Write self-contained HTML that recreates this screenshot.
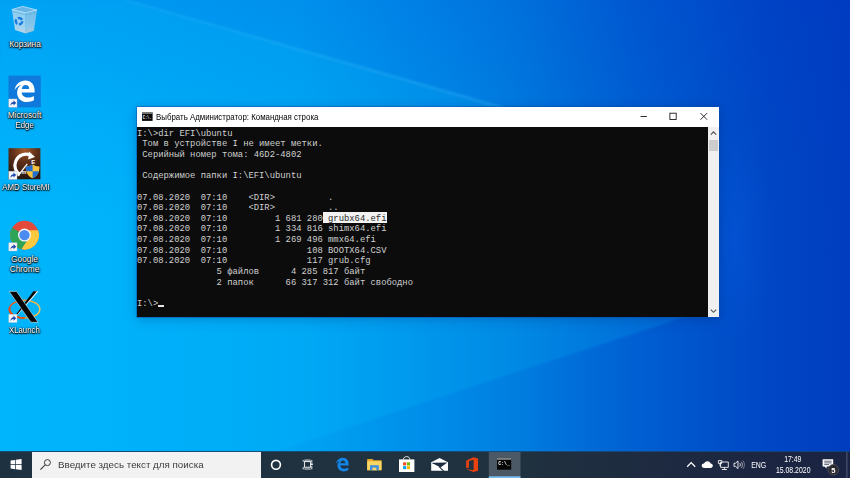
<!DOCTYPE html>
<html lang="ru">
<head>
<meta charset="utf-8">
<title>Командная строка</title>
<style>
*{box-sizing:border-box;margin:0;padding:0}
html,body{width:850px;height:478px;overflow:hidden;background:#0088e6}
body{position:relative;font-family:"Liberation Sans",sans-serif}
#wall,#icons{position:absolute;left:0;top:0;width:850px;height:478px}
/* desktop icon labels */
.lbl{position:absolute;width:80px;text-align:center;color:#fff;font-size:8.3px;line-height:10px;white-space:nowrap;
  text-shadow:0 1px 1px rgba(0,0,0,.95),0 0 2px rgba(0,0,0,.9),1px 1px 2px rgba(0,0,0,.7),0 0 1px rgba(0,0,0,.8)}
.lbl span{display:inline-block;transform-origin:50% 50%}
/* cmd window */
#win{position:absolute;left:137px;top:107px;width:582px;height:210px;background:#fff;
  box-shadow:0 0 0 .8px rgba(10,80,175,.6),0 3px 12px rgba(0,30,100,.22),0 0 5px rgba(0,30,100,.12)}
#title{position:absolute;left:0;top:0;width:582px;height:20px;background:#fff;color:#000;font-size:8.5px;line-height:20px}
#title .cap{position:absolute;left:18.9px;top:0;white-space:nowrap;transform-origin:0 50%;transform:scaleX(.927)}
#title svg{position:absolute;left:0;top:0}
#con{position:absolute;left:0;top:20px;width:571px;height:190px;background:#0c0c0c;overflow:hidden}
#selbg{position:absolute;left:185.9px;top:85px;width:63.8px;height:10.8px;background:#f2f2f2}
#con pre{position:absolute;left:0;top:1.8px;font-family:"Liberation Mono",monospace;font-size:8.85px;line-height:10.62px;color:#cfcfcf;white-space:pre}
#con .sel{color:#2a2a2a}
#cur{position:absolute;left:21.4px;top:177.6px;width:5.2px;height:2px;background:#e6e6e6}
#sb{position:absolute;left:571px;top:20px;width:11px;height:190px;background:#f0f0f0}
#sb .thumb{position:absolute;left:.6px;top:13.2px;width:9.8px;height:10.6px;background:#cdcdcd}
#sb svg{position:absolute;left:0;top:0}
/* taskbar */
#tb{position:absolute;left:0;top:451px;width:850px;height:27px;
  background:linear-gradient(90deg,#1e3141 0,#20323f 58%,#1e2c40 73%,#1c2641 88%,#1a2342 100%)}
#tb:before{content:"";position:absolute;left:0;top:0;width:850px;height:1px;background:rgba(0,130,225,.35)}
#search{position:absolute;left:32px;top:1px;width:228.6px;height:26px;background:#f2f2f2;color:#3b3b3b;font-size:9.9px;line-height:26px}
#search span{position:absolute;left:26.4px;top:.3px;white-space:nowrap;transform-origin:0 50%;transform:scaleX(.992)}
#tbsvg{position:absolute;left:0;top:0;width:850px;height:27px;will-change:transform}
</style>
</head>
<body>
<svg id="wall" viewBox="0 0 850 478" preserveAspectRatio="none">
  <defs>
    <linearGradient id="bg" x1="0" y1="0" x2="1" y2="0">
      <stop offset="0" stop-color="#00b2fc"/>
      <stop offset="0.118" stop-color="#00affa"/>
      <stop offset="0.35" stop-color="#00a4f4"/>
      <stop offset="0.506" stop-color="#008de9"/>
      <stop offset="0.60" stop-color="#007fe0"/>
      <stop offset="0.75" stop-color="#005fd2"/>
      <stop offset="0.90" stop-color="#0047c5"/>
      <stop offset="1" stop-color="#003dbf"/>
    </linearGradient>
    <linearGradient id="vg" x1="0" y1="0" x2="0" y2="1">
      <stop offset="0" stop-color="#0030c8" stop-opacity=".17"/>
      <stop offset=".30" stop-color="#0030c8" stop-opacity=".04"/>
      <stop offset=".45" stop-color="#0030c8" stop-opacity="0"/>
      <stop offset="1" stop-color="#0030c8" stop-opacity="0"/>
    </linearGradient>
    <radialGradient id="glow" cx="735" cy="240" r="70" gradientUnits="userSpaceOnUse" gradientTransform="translate(735 240) scale(.55 1.5) translate(-735 -240)">
      <stop offset="0" stop-color="#1468ff" stop-opacity=".16"/>
      <stop offset="1" stop-color="#1468ff" stop-opacity="0"/>
    </radialGradient>
    <filter id="bl" x="-10%" y="-10%" width="120%" height="120%"><feGaussianBlur stdDeviation="1.2"/></filter>
    <filter id="bl2" x="-10%" y="-10%" width="120%" height="120%"><feGaussianBlur stdDeviation="6"/></filter>
  </defs>
  <rect width="850" height="478" fill="url(#bg)"/>
  <rect width="850" height="478" fill="url(#vg)"/>
  <!-- light beams -->
  <polygon points="0,0 128,0 506,107 560,215 682,318 194,478 0,478" fill="#00c8ff" opacity=".16" filter="url(#bl)"/>
  <polygon points="123,0 128,0 516,110 504,110" fill="#8fd6ff" opacity=".12" filter="url(#bl)"/>
  
  <rect x="690" y="120" width="110" height="240" fill="url(#glow)"/>
</svg>

<!-- desktop icons -->
<svg id="icons" viewBox="0 0 850 478">
  <defs>
    <linearGradient id="binL" x1="0" y1="0" x2="0" y2="1"><stop offset="0" stop-color="#9fd0ee"/><stop offset=".7" stop-color="#b4d9ef"/><stop offset="1" stop-color="#d6dde2"/></linearGradient>
    <linearGradient id="binR" x1="0" y1="0" x2="0" y2="1"><stop offset="0" stop-color="#7fbfe6"/><stop offset=".7" stop-color="#9acbe8"/><stop offset="1" stop-color="#c3ccd2"/></linearGradient>
    <radialGradient id="amd" cx=".5" cy=".05" r=".9"><stop offset="0" stop-color="#a4592a"/><stop offset=".45" stop-color="#5c2e17"/><stop offset="1" stop-color="#2a1710"/></radialGradient>
    <linearGradient id="xring" x1="0" y1="0" x2="1" y2="0"><stop offset="0" stop-color="#ea4b12"/><stop offset=".45" stop-color="#f08a25"/><stop offset="1" stop-color="#f3c453"/></linearGradient>
  </defs>
  <!-- recycle bin -->
  <g>
    <path d="M11.9 9.6 L25.7 12.8 L25.7 33.6 L15 29.9Z" fill="url(#binL)" opacity=".88"/>
    <path d="M25.7 12.8 L37 10 L33.9 30.8 L25.7 33.6Z" fill="url(#binR)" opacity=".88"/>
    <path d="M11.9 9.6 L22.6 6.4 L37 10 L25.7 12.8Z" fill="#6cb6e4" stroke="#cfeafa" stroke-width=".8" stroke-linejoin="round" opacity=".95"/><path d="M13 11.4 L25.7 14.6 L36 11.8" fill="none" stroke="#5aaee2" stroke-width="1.2" opacity=".55"/>
    <circle cx="19" cy="21.2" r="3.2" fill="none" stroke="#1a7be0" stroke-width="2.4" stroke-dasharray="5 1.7"/>
  </g>
  <!-- edge -->
  <g>
    <rect x="8.5" y="75.6" width="32.3" height="31.8" fill="#0f7adb"/>
    <path d="M14.6 90.2 C15.6 84.2 19.9 80.6 25.4 80.6 C31.2 80.6 34.6 84.9 34.6 90.4 L34.6 92.6 L21.6 92.6 C21.9 95.9 24.6 97.6 27.9 97.6 C30.1 97.6 32.1 97 33.9 95.9 L33.9 100.3 C32 101.4 29.6 102 27 102 C21.3 102 17.1 98.4 17.1 92.7 C17.1 89.3 18.8 86.6 21.4 85.1 C18.6 85.6 16.1 87.4 14.6 90.2Z M21.7 89 L29.2 89 C29.2 86.4 27.9 84.9 25.6 84.9 C23.5 84.9 22 86.5 21.7 89Z" fill="#fff"/>
    <g transform="translate(8.8 99)">
      <rect x="0" y="0" width="8.2" height="8.2" fill="#f4f6f8" stroke="#b9c4d0" stroke-width=".4"/>
      <path d="M1.6 7.2 C1.5 4.5 2.9 3.1 4.7 3 L4.7 1.3 L7.4 3.9 L4.7 6.4 L4.7 4.8 C3.3 4.8 2.3 5.6 1.6 7.2Z" fill="#1c49ad"/>
    </g>
  </g>
  <!-- AMD StoreMI -->
  <g>
    <rect x="8.5" y="148.2" width="31.9" height="31.1" fill="url(#amd)"/>
    <path d="M20 174.5 C15.4 172 13.6 166 16 160.6 C18.6 155 25.3 152.6 30.6 155.2" fill="none" stroke="#fff" stroke-width="3.2"/>
    <path d="M29 151.4 L35 157 L28.2 159.4Z" fill="#fff"/>
    <path d="M17.6 176.2 L27.3 163.8" stroke="#fff" stroke-width="1.3"/>
    <text x="31.3" y="164.4" font-size="6" font-weight="bold" fill="#fff" font-family="Liberation Sans, sans-serif">E</text>
    <text x="21.4" y="174.2" font-size="5.4" font-weight="bold" fill="#fff" font-family="Liberation Sans, sans-serif">m</text>
    <g>
      <path d="M32.6 164.5 C34.6 165.8 36.8 166.4 39.5 166.5 C39.5 172.4 37.3 176.3 32.6 178.3 C27.9 176.3 25.7 172.4 25.7 166.5 C28.4 166.4 30.6 165.8 32.6 164.5Z" fill="#f4c23c"/>
      <path d="M32.6 164.5 C30.6 165.8 28.4 166.4 25.7 166.5 C25.7 168.3 25.9 169.9 26.3 171.3 L32.6 171.3Z" fill="#1f6fd2"/>
      <path d="M32.6 171.3 L38.9 171.3 C38.1 174.6 36 176.9 32.6 178.3Z" fill="#1f6fd2"/>
    </g>
    <g transform="translate(8.8 171.2)">
      <rect x="0" y="0" width="8.2" height="8.2" fill="#f4f6f8" stroke="#b9c4d0" stroke-width=".4"/>
      <path d="M1.6 7.2 C1.5 4.5 2.9 3.1 4.7 3 L4.7 1.3 L7.4 3.9 L4.7 6.4 L4.7 4.8 C3.3 4.8 2.3 5.6 1.6 7.2Z" fill="#1c49ad"/>
    </g>
  </g>
  <!-- chrome -->
  <g>
    <circle cx="24.5" cy="235.1" r="14.3" fill="#e34a3c"/>
    <path d="M24.5 235.1 L12.1 228 A14.3 14.3 0 0 0 21 248.95 L27.6 236.9Z" fill="#2fa456"/>
    <path d="M24.5 235.1 L12.1 228 A14.3 14.3 0 0 0 21.9 249.15 L29.2 237.5Z" fill="#2fa456"/>
    <path d="M24.5 235.1 L38.3 231.4 A14.3 14.3 0 0 1 21.6 249.1 L29.8 236.6Z" fill="#fbc940"/>
    <path d="M24.5 230.2 L37.95 230.2 A14.3 14.3 0 0 1 21.7 249.12 L30 238Z" fill="#fbc940"/>
    <circle cx="24.5" cy="235.1" r="6.5" fill="#f4f6f8"/>
    <circle cx="24.5" cy="235.1" r="5.2" fill="#4c8bf0"/>
    <g transform="translate(8.8 242.8)">
      <rect x="0" y="0" width="8.2" height="8.2" fill="#f4f6f8" stroke="#b9c4d0" stroke-width=".4"/>
      <path d="M1.6 7.2 C1.5 4.5 2.9 3.1 4.7 3 L4.7 1.3 L7.4 3.9 L4.7 6.4 L4.7 4.8 C3.3 4.8 2.3 5.6 1.6 7.2Z" fill="#1c49ad"/>
    </g>
  </g>
  <!-- XLaunch -->
  <g>
    <ellipse cx="24.6" cy="309.2" rx="15.2" ry="8.9" fill="none" stroke="url(#xring)" stroke-width="1.5"/>
    <path d="M34.6 291.2 L38.4 291.2 L17.6 315 L15.9 315Z" fill="#fff"/><path d="M33.4 291.2 L37 291.2 L16.9 315 L15.6 315Z" fill="#0a0a0a"/>
    <path d="M9.2 291.4 L16.6 291.4 L38 322.3 L30.9 322.3Z" fill="#050505" stroke="#fff" stroke-width=".5"/>
    <path d="M9.6 308 A15.2 8.9 0 0 0 24.6 318.1" fill="none" stroke="#ea4b12" stroke-width="2"/>
    <g transform="translate(8.8 314.3)">
      <rect x="0" y="0" width="8.2" height="8.2" fill="#f4f6f8" stroke="#b9c4d0" stroke-width=".4"/>
      <path d="M1.6 7.2 C1.5 4.5 2.9 3.1 4.7 3 L4.7 1.3 L7.4 3.9 L4.7 6.4 L4.7 4.8 C3.3 4.8 2.3 5.6 1.6 7.2Z" fill="#1c49ad"/>
    </g>
  </g>
</svg>
<div class="lbl" style="left:-15px;top:38.6px"><span>Корзина</span></div>
<div class="lbl" style="left:-15.5px;top:109.8px"><span>Microsoft</span><br><span style="transform:scaleX(.94)">Edge</span></div>
<div class="lbl" style="left:-14.5px;top:182.3px"><span style="transform:scaleX(.95)">AMD StoreMI</span></div>
<div class="lbl" style="left:-15.5px;top:253.8px"><span>Google</span><br><span>Chrome</span></div>
<div class="lbl" style="left:-15.2px;top:325.3px"><span style="transform:scaleX(.94)">XLaunch</span></div>

<!-- command prompt window -->
<div id="win">
  <div id="title">
    <svg width="582" height="20" viewBox="0 0 582 20">
      <rect x="5" y="5.3" width="10.6" height="8.6" fill="#0a0a0a"/>
      <rect x="5" y="5.3" width="10.6" height="1.5" fill="#8f8f8f"/>
      <text x="5.8" y="12.2" font-size="4.6" font-weight="bold" fill="#fff" font-family="Liberation Mono, monospace" textLength="8.6" lengthAdjust="spacingAndGlyphs">C:\.</text>
      <path d="M503.5 9.5 H509.9" stroke="#1a1a1a" stroke-width=".9"/>
      <rect x="532.9" y="6.2" width="6.3" height="6.3" fill="none" stroke="#1a1a1a" stroke-width=".9"/>
      <path d="M563.5 6.1 L570.1 12.7 M570.1 6.1 L563.5 12.7" stroke="#1a1a1a" stroke-width=".9"/>
    </svg>
    <span class="cap">Выбрать Администратор: Командная строка</span>
  </div>
  <div id="con"><div id="selbg"></div><pre>I:\&gt;dir EFI\ubuntu
 Том в устройстве I не имеет метки.
 Серийный номер тома: 46D2-4802

 Содержимое папки I:\EFI\ubuntu

07.08.2020  07:10    &lt;DIR&gt;          .
07.08.2020  07:10    &lt;DIR&gt;          ..
07.08.2020  07:10         1 681 280<span class="sel"> grubx64.efi</span>
07.08.2020  07:10         1 334 816 shimx64.efi
07.08.2020  07:10         1 269 496 mmx64.efi
07.08.2020  07:10               108 BOOTX64.CSV
07.08.2020  07:10               117 grub.cfg
               5 файлов      4 285 817 байт
               2 папок      66 317 312 байт свободно

I:\&gt;</pre><div id="cur"></div></div>
  <div id="sb"><div class="thumb"></div>
    <svg width="11" height="190" viewBox="0.5 0 11 190">
      <path d="M3.3 7.6 L6 4.9 L8.7 7.6" fill="none" stroke="#505050" stroke-width="1.1"/>
      <path d="M3.3 182.6 L6 185.3 L8.7 182.6" fill="none" stroke="#505050" stroke-width="1.1"/>
    </svg>
  </div>
</div>

<!-- taskbar -->
<div id="tb">
  <div id="search"><span>Введите здесь текст для поиска</span></div>
  <svg id="tbsvg" viewBox="0 451 850 27">
    <!-- start -->
    <path d="M10.6 460.6 L15.2 459.95 V464.2 H10.6Z M15.9 459.85 L21.6 459.05 V464.2 H15.9Z M10.6 464.9 H15.2 V469.2 L10.6 468.55Z M15.9 464.9 H21.6 V470.1 L15.9 469.3Z" fill="#fff"/>
    <!-- magnifier -->
    <circle cx="47.4" cy="462.6" r="3" fill="none" stroke="#3a3a3a" stroke-width="1"/>
    <path d="M45.2 464.8 L40.4 469.6" stroke="#3a3a3a" stroke-width="1.1"/>
    <!-- cortana -->
    <circle cx="276" cy="464.8" r="4.4" fill="none" stroke="#fff" stroke-width="1.6"/>
    <!-- task view -->
    <g fill="none" stroke="#fff" stroke-width=".9">
      <rect x="304.4" y="461.6" width="6.2" height="5.6"/>
      <path d="M303.2 460 V461.6 M303.2 467.2 V469.4 M311.8 460 V462.6 M311.8 466 V469.4 M304.4 460.1 H310.6 M304.4 469 H310.6"/>
    </g>
    <circle cx="311.9" cy="464.3" r=".95" fill="#fff"/>
    <!-- edge -->
    <g transform="translate(342.3 464.6) scale(.64) translate(-24.6 -91.3)">
      <path d="M14.6 90.2 C15.6 84.2 19.9 80.6 25.4 80.6 C31.2 80.6 34.6 84.9 34.6 90.4 L34.6 92.6 L21.6 92.6 C21.9 95.9 24.6 97.6 27.9 97.6 C30.1 97.6 32.1 97 33.9 95.9 L33.9 100.3 C32 101.4 29.6 102 27 102 C21.3 102 17.1 98.4 17.1 92.7 C17.1 89.3 18.8 86.6 21.4 85.1 C18.6 85.6 16.1 87.4 14.6 90.2Z M21.7 89 L29.2 89 C29.2 86.4 27.9 84.9 25.6 84.9 C23.5 84.9 22 86.5 21.7 89Z" fill="#1385e6"/>
    </g>
    <!-- explorer -->
    <g>
      <path d="M367.2 459 H372.6 L373.6 460.2 H381.5 V470.2 H367.2Z" fill="#e8a92a"/>
      <rect x="367.2" y="461.2" width="14.3" height="9" fill="#f9d564"/>
      <path d="M370 465.2 H378.8 V470.2 H370Z" fill="#3d8fe2"/>
      <rect x="372.4" y="467.6" width="4" height="2.6" fill="#f9d564"/>
    </g>
    <!-- store -->
    <g>
      <path d="M403.4 459.6 C403.4 455.6 409.9 455.6 409.9 459.6" fill="none" stroke="#fff" stroke-width=".9"/>
      <path d="M399 459.4 H414.4 V472 H399Z" fill="#fff"/>
      <rect x="403.1" y="462.3" width="3.1" height="3.1" fill="#ef4f25"/>
      <rect x="406.9" y="462.3" width="3.1" height="3.1" fill="#7db700"/>
      <rect x="403.1" y="466.1" width="3.1" height="3.1" fill="#00a3ee"/>
      <rect x="406.9" y="466.1" width="3.1" height="3.1" fill="#fdb700"/>
    </g>
    <!-- mail -->
    <g>
      <path d="M431.2 462.2 L439.6 458 L448 462.2 V470.8 H431.2Z" fill="#fff"/>
      <path d="M432.6 463.4 L445.6 463.2 L439.8 467.4 L443.6 470.8" fill="none" stroke="#1f2d40" stroke-width="1.1"/>
      <path d="M432.6 463.2 L445.8 463 L440 467.2Z" fill="#1f2d40"/>
    </g>
    <!-- office -->
    <path d="M466.2 468.6 V460.4 L473.6 457.2 L478 458.4 V470.8 L473.6 472 L466.2 469.2 L473.6 470 V459.8 L468.9 460.9 V467.5Z" fill="#e8430f"/>
    <!-- cmd active -->
    <rect x="488.8" y="452" width="31.7" height="26" fill="#4b5866"/>
    <rect x="488.8" y="476.3" width="31.7" height="1.7" fill="#79bdf0"/>
    <rect x="497" y="458.2" width="14.2" height="11.5" fill="#050505"/>
    <rect x="497" y="458.2" width="14.2" height="1.5" fill="#9a9a9a"/>
    <text x="498.2" y="464.6" font-size="5.2" font-weight="bold" fill="#fff" font-family="Liberation Mono, monospace" textLength="11.6" lengthAdjust="spacingAndGlyphs">C:\_</text>
    <!-- tray -->
    <path d="M687.2 466.7 L691.2 462.6 L695.2 466.7" fill="none" stroke="#fff" stroke-width="1.3"/>
    <path d="M704.3 468 C702.6 468 701.7 466.9 701.7 465.7 C701.7 464.4 702.8 463.5 704 463.6 C704.5 462 706 461.1 707.6 461.2 C709.2 461.3 710.3 462.3 710.7 463.6 C711.9 463.7 712.8 464.6 712.8 465.8 C712.8 467 711.9 468 710.6 468Z" fill="#fff"/>
    <g fill="none" stroke="#fff" stroke-width=".85">
      <path d="M720.6 462 H728.3 V467.4 H720.6Z"/>
      <path d="M724.4 467.4 V469.4 M721.8 469.5 H727"/>
      <path d="M718.4 460.6 H721.8 V463.4 H718.4Z M720 463.4 V466"/>
    </g>
    <g fill="none" stroke="#fff" stroke-width=".85">
      <path d="M734 463.2 H735.6 L738 460.9 V468.7 L735.6 466.4 H734Z"/>
      <path d="M739.8 463.1 C740.5 464.1 740.5 465.5 739.8 466.5" opacity=".95"/>
      <path d="M741.4 461.8 C742.7 463.6 742.7 466 741.4 467.8" opacity=".7"/>
      <path d="M743 460.6 C744.9 463.2 744.9 466.4 743 469" opacity=".45"/>
    </g>
    <g font-family="Liberation Sans, sans-serif" fill="#fff" text-anchor="middle">
      <text x="758.7" y="467.5" font-size="8.5" textLength="15" lengthAdjust="spacingAndGlyphs">ENG</text>
      <text x="792.8" y="461.7" font-size="8.6" textLength="17.2" lengthAdjust="spacingAndGlyphs">17:49</text>
      <text x="793.2" y="473.4" font-size="8.6" textLength="34.6" lengthAdjust="spacingAndGlyphs">15.08.2020</text>
    </g>
    <!-- notifications -->
    <path d="M822.6 459.2 H833.2 V466.6 H826.6 L826.6 468.6 L824.4 466.6 H822.6Z" fill="#fff"/>
    <path d="M824.2 461.2 H831.6 M824.2 462.9 H831.6 M824.2 464.6 H829" stroke="#1c2742" stroke-width=".7"/>
    <circle cx="833.3" cy="469.7" r="5.3" fill="#2b2b2f" stroke="#55575c" stroke-width=".8"/>
    <text x="833.3" y="472.6" font-size="7.6" font-weight="bold" fill="#fff" text-anchor="middle" font-family="Liberation Sans, sans-serif">5</text>
    <path d="M846.9 452 V478" stroke="#6a7386" stroke-width=".7"/>
  </svg>
</div>
</body>
</html>
